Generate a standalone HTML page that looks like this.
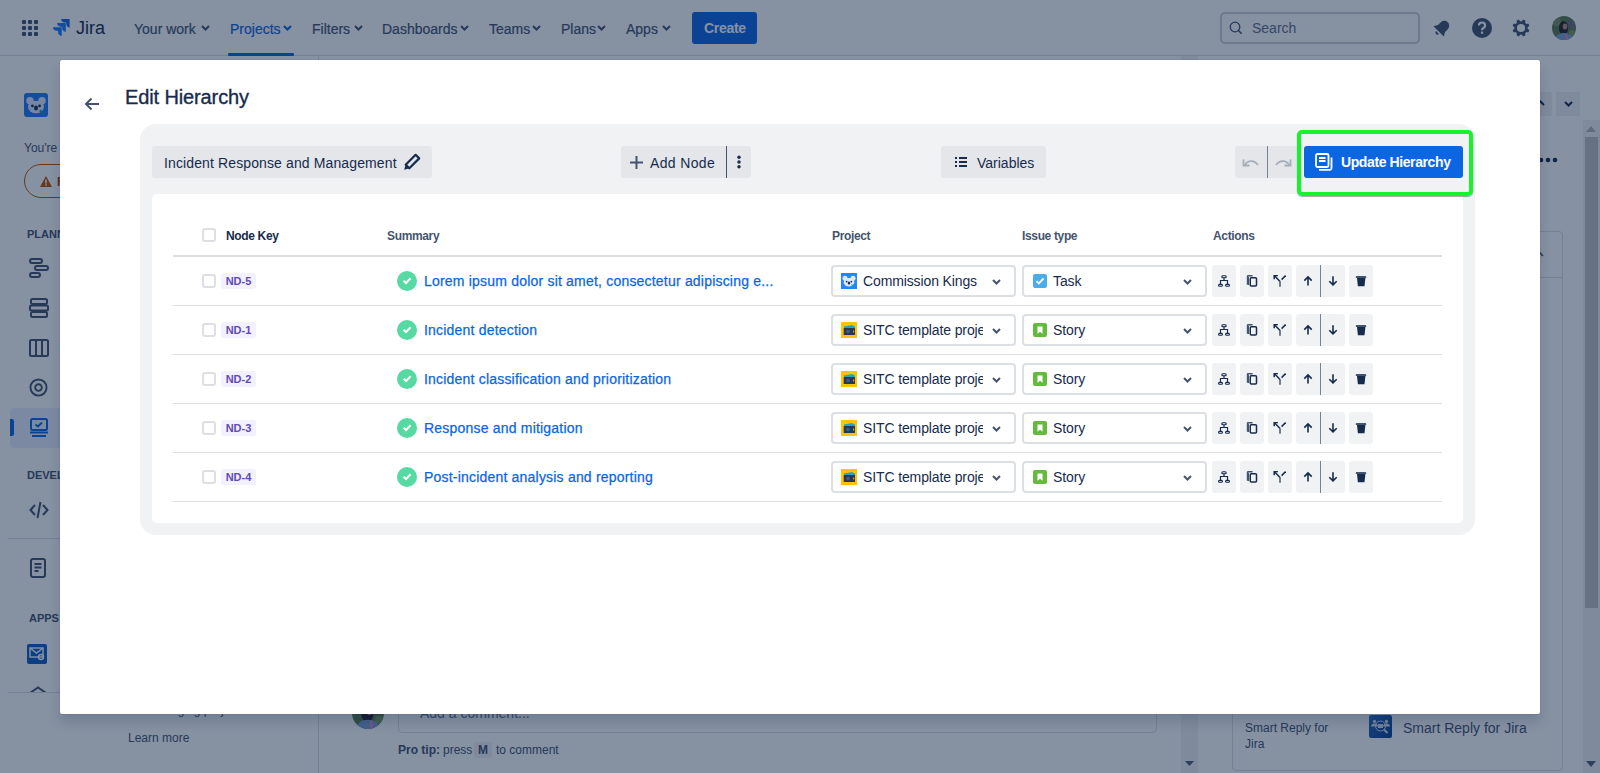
<!DOCTYPE html>
<html><head><meta charset="utf-8">
<style>
*{box-sizing:border-box;margin:0;padding:0}
html,body{width:1600px;height:773px;overflow:hidden;background:#fff;font-family:"Liberation Sans",sans-serif;color:#172b4d}
.a{position:absolute}
svg{display:block}
.nav{left:0;top:0;width:1600px;height:56px;background:#fff;border-bottom:1px solid #dcdfe4}
.ni{top:22px;font-size:14px;color:#44546f;white-space:nowrap;line-height:14px;-webkit-text-stroke:0.2px currentColor}
.side{left:0;top:56px;width:319px;height:717px;background:#fff;border-right:1px solid #dcdfe4}
.lab{font-size:11px;font-weight:bold;color:#44546f;line-height:11px}
.blanket{left:0;top:0;width:1600px;height:773px;background:rgba(9,30,66,0.49)}
.modal{left:60px;top:60px;width:1480px;height:654px;background:#fff;border-radius:2px;box-shadow:0 8px 12px rgba(9,30,66,0.15),0 0 1px rgba(9,30,66,0.31)}
.panel{left:140px;top:124px;width:1335px;height:411px;background:#f1f2f4;border-radius:16px}
.btn{background:#e4e6ea;border-radius:3px;height:32px;top:146px;font-size:14px;color:#172b4d;white-space:nowrap}
.btn .t{position:absolute;top:9px;line-height:14px}
.cont{left:152px;top:194px;width:1311px;height:329px;background:#fff;border-radius:5px}
.th{top:230px;font-size:12px;font-weight:bold;color:#44546f;line-height:12px;white-space:nowrap;letter-spacing:-0.35px}
.hl{left:173px;width:1269px;height:1px;background:#dcdfe4}
.cb{left:202px;width:14px;height:14px;border:2px solid #dcdfe4;border-radius:3px;background:#fff}
.loz{left:221px;width:35px;height:16px;background:#f3f0ff;border-radius:3px;color:#5e4db2;font-size:11px;font-weight:bold;line-height:16px;text-align:center}
.chk{left:397px;width:20px;height:20px;border-radius:50%;background:#57d9a3}
.sum{left:424px;font-size:14px;color:#0c66e4;line-height:14px;white-space:nowrap;letter-spacing:0.2px;-webkit-text-stroke:0.25px #0c66e4}
.sel{height:32px;border:2px solid #dcdfe4;border-radius:4px;background:#fff}
.sel .t{position:absolute;left:30px;top:6px;font-size:14px;line-height:16px;color:#172b4d;white-space:nowrap;letter-spacing:-0.12px}
.ab{width:24px;height:32px;background:#f1f2f4;border-radius:3px}
</style></head><body>

<!-- ============ background page ============ -->
<div class="a nav"></div>
<!-- grid icon -->
<svg class="a" style="left:22px;top:20px" width="16" height="16" viewBox="0 0 16 16" fill="#44546f">
<rect x="0" y="0" width="4" height="4" rx="1"/><rect x="6" y="0" width="4" height="4" rx="1"/><rect x="12" y="0" width="4" height="4" rx="1"/>
<rect x="0" y="6" width="4" height="4" rx="1"/><rect x="6" y="6" width="4" height="4" rx="1"/><rect x="12" y="6" width="4" height="4" rx="1"/>
<rect x="0" y="12" width="4" height="4" rx="1"/><rect x="6" y="12" width="4" height="4" rx="1"/><rect x="12" y="12" width="4" height="4" rx="1"/>
</svg>
<!-- jira logo -->
<svg class="a" style="left:52px;top:19px" width="18" height="18" viewBox="0 0 18 18">
<path d="M17.5 0H9.2c0 2 1.6 3.6 3.6 3.6h1.5v1.5c0 2 1.6 3.6 3.3 3.6V.6c0-.3-.1-.6-.1-.6z" fill="#1868db"/>
<path d="M13.4 4.1H5.1c0 2 1.6 3.6 3.6 3.6h1.5v1.5c0 2 1.6 3.6 3.6 3.6V4.7c0-.3-.2-.6-.4-.6z" fill="#1d7afc"/>
<path d="M9.3 8.2H1c0 2 1.6 3.6 3.6 3.6h1.5v1.5c0 2 1.6 3.6 3.6 3.6V8.8c0-.3-.2-.6-.4-.6z" fill="#1d7afc"/>
</svg>
<div class="a" style="left:76px;top:19px;font-size:18px;line-height:18px;color:#172b4d;letter-spacing:0px">Jira</div>

<div class="a ni" style="left:134px">Your work</div>
<svg class="a" style="left:201px;top:25px" width="9" height="6" viewBox="0 0 9 6"><path d="M1 1l3.5 3.5L8 1" stroke="#44546f" stroke-width="2" fill="none"/></svg>
<div class="a ni" style="left:230px;color:#0c66e4">Projects</div>
<svg class="a" style="left:283px;top:25px" width="9" height="6" viewBox="0 0 9 6"><path d="M1 1l3.5 3.5L8 1" stroke="#0c66e4" stroke-width="2" fill="none"/></svg>
<div class="a" style="left:228px;top:53px;width:66px;height:3px;background:#0c66e4;border-radius:1px"></div>
<div class="a ni" style="left:312px">Filters</div>
<svg class="a" style="left:354px;top:25px" width="9" height="6" viewBox="0 0 9 6"><path d="M1 1l3.5 3.5L8 1" stroke="#44546f" stroke-width="2" fill="none"/></svg>
<div class="a ni" style="left:382px">Dashboards</div>
<svg class="a" style="left:460px;top:25px" width="9" height="6" viewBox="0 0 9 6"><path d="M1 1l3.5 3.5L8 1" stroke="#44546f" stroke-width="2" fill="none"/></svg>
<div class="a ni" style="left:489px">Teams</div>
<svg class="a" style="left:532px;top:25px" width="9" height="6" viewBox="0 0 9 6"><path d="M1 1l3.5 3.5L8 1" stroke="#44546f" stroke-width="2" fill="none"/></svg>
<div class="a ni" style="left:561px">Plans</div>
<svg class="a" style="left:597px;top:25px" width="9" height="6" viewBox="0 0 9 6"><path d="M1 1l3.5 3.5L8 1" stroke="#44546f" stroke-width="2" fill="none"/></svg>
<div class="a ni" style="left:626px">Apps</div>
<svg class="a" style="left:662px;top:25px" width="9" height="6" viewBox="0 0 9 6"><path d="M1 1l3.5 3.5L8 1" stroke="#44546f" stroke-width="2" fill="none"/></svg>
<div class="a" style="left:692px;top:12px;width:65px;height:32px;background:#0c66e4;border-radius:3px"></div>
<div class="a" style="left:704px;top:21px;font-size:14px;line-height:14px;color:#fff;font-weight:bold;letter-spacing:-0.3px">Create</div>

<div class="a" style="left:1220px;top:12px;width:200px;height:32px;border:2px solid #ccd1d9;border-radius:5px;background:#fff"></div>
<svg class="a" style="left:1229px;top:21px" width="14" height="14" viewBox="0 0 14 14"><circle cx="6" cy="6" r="4.8" stroke="#44546f" stroke-width="1.3" fill="none"/><path d="M9.5 9.5l3.2 3.2" stroke="#44546f" stroke-width="1.4"/></svg>
<div class="a" style="left:1252px;top:21px;font-size:14px;line-height:14px;color:#626f86">Search</div>
<!-- bell -->
<svg class="a" style="left:1431px;top:17px" width="22" height="22" viewBox="0 0 24 24"><g transform="rotate(45 12 12)" fill="#44546f"><path d="M12 3.2c-3.4 0-5.4 2.6-5.4 5.6v4L4 17.2h16l-2.6-4.4v-4c0-3-2-5.6-5.4-5.6z"/><path d="M9.8 19a2.2 2.2 0 0 0 4.4 0z"/></g></svg>
<!-- help -->
<svg class="a" style="left:1472px;top:18px" width="20" height="20" viewBox="0 0 20 20"><circle cx="10" cy="10" r="10" fill="#44546f"/><path d="M6.9 7.6c0-1.9 1.4-3.1 3.1-3.1s3.1 1.2 3.1 3.1c0 1.6-1.2 2.2-2 2.6-.6.3-1 .6-1 1.3v.8" stroke="#fff" stroke-width="2.2" fill="none"/><rect x="8.9" y="13.6" width="2.3" height="2.2" fill="#fff"/></svg>
<!-- gear -->
<svg class="a" style="left:1512px;top:19px" width="18" height="18" viewBox="0 0 18 18"><g fill="#44546f"><rect x="7.4" y="0.4" width="3.2" height="3.6" rx="1.1" transform="rotate(22.5 9 9)"/><rect x="7.4" y="0.4" width="3.2" height="3.6" rx="1.1" transform="rotate(67.5 9 9)"/><rect x="7.4" y="0.4" width="3.2" height="3.6" rx="1.1" transform="rotate(112.5 9 9)"/><rect x="7.4" y="0.4" width="3.2" height="3.6" rx="1.1" transform="rotate(157.5 9 9)"/><rect x="7.4" y="0.4" width="3.2" height="3.6" rx="1.1" transform="rotate(202.5 9 9)"/><rect x="7.4" y="0.4" width="3.2" height="3.6" rx="1.1" transform="rotate(247.5 9 9)"/><rect x="7.4" y="0.4" width="3.2" height="3.6" rx="1.1" transform="rotate(292.5 9 9)"/><rect x="7.4" y="0.4" width="3.2" height="3.6" rx="1.1" transform="rotate(337.5 9 9)"/></g><circle cx="9" cy="9" r="5.4" stroke="#44546f" stroke-width="2.6" fill="none"/></svg>
<!-- avatar -->
<svg class="a" style="left:1552px;top:16px" width="24" height="24" viewBox="0 0 24 24"><defs><clipPath id="avc"><circle cx="12" cy="12" r="12"/></clipPath></defs><g clip-path="url(#avc)"><rect width="24" height="24" fill="#5f7d4e"/><circle cx="5" cy="6" r="4" fill="#7a8f63"/><circle cx="19" cy="8" r="4" fill="#6a6f7a"/><circle cx="20" cy="17" r="3" fill="#7d9a5a"/><ellipse cx="11.5" cy="12" rx="4.6" ry="7" fill="#2b2327"/><ellipse cx="13" cy="10.5" rx="2.3" ry="3" fill="#b98f7e"/><path d="M3 24c1-5 4-7 9-7s8 2 9 7z" fill="#7d9fd0"/><rect x="13.5" y="18" width="2.2" height="6" fill="#d98cbf"/></g></svg>
<div class="a side"></div>
<!-- project icon -->
<div class="a" style="left:24px;top:93px;width:24px;height:24px;background:#1d7afc;border-radius:3px"></div>
<svg class="a" style="left:24px;top:93px" width="24" height="24" viewBox="0 0 16 16"><circle cx="4" cy="5.2" r="2.5" fill="#dfeaff"/><circle cx="12" cy="5.2" r="2.5" fill="#dfeaff"/><ellipse cx="8" cy="9.3" rx="5.3" ry="4.2" fill="#dfeaff"/><circle cx="5.6" cy="8.6" r=".9" fill="#172b4d"/><circle cx="10.4" cy="8.6" r=".9" fill="#172b4d"/><ellipse cx="8" cy="10" rx="1.3" ry="1.6" fill="#172b4d"/><path d="M10.5 11.5l2.5 2.5" stroke="#00a3bf" stroke-width="1.3"/></svg>
<div class="a" style="left:24px;top:142px;font-size:12px;line-height:12px;color:#44546f;white-space:nowrap">You're in a team-managed project</div>
<div class="a" style="left:24px;top:164px;width:200px;height:34px;border:1px solid #c25100;border-radius:17px"></div>
<svg class="a" style="left:40px;top:176px" width="12" height="11" viewBox="0 0 12 11"><path d="M6 0l6 11H0z" fill="#c25100"/><rect x="5.2" y="3.5" width="1.6" height="4" fill="#fff"/><rect x="5.2" y="8.3" width="1.6" height="1.4" fill="#fff"/></svg>
<div class="a" style="left:57px;top:176px;font-size:12px;line-height:12px;font-weight:bold;color:#a54800;white-space:nowrap">Free trial</div>
<div class="a lab" style="left:27px;top:229px">PLANNING</div>
<!-- sidebar icons -->
<svg class="a" style="left:29px;top:258px" width="20" height="20" viewBox="0 0 20 20" fill="none" stroke="#44546f" stroke-width="2"><rect x="1" y="1" width="12" height="4" rx="2"/><rect x="6" y="8" width="13" height="4" rx="2"/><rect x="1" y="15" width="10" height="4" rx="2"/></svg>
<svg class="a" style="left:29px;top:298px" width="20" height="20" viewBox="0 0 20 20" fill="none" stroke="#44546f" stroke-width="2"><rect x="2" y="1" width="16" height="5" rx="1.5"/><rect x="1" y="7.5" width="18" height="5" rx="1.5"/><rect x="2" y="14" width="16" height="5" rx="1.5"/></svg>
<svg class="a" style="left:29px;top:339px" width="20" height="18" viewBox="0 0 20 18" fill="none" stroke="#44546f" stroke-width="2"><rect x="1" y="1" width="18" height="16" rx="1.5"/><path d="M7 1v16M13 1v16"/></svg>
<svg class="a" style="left:29px;top:378px" width="19" height="19" viewBox="0 0 20 20" fill="none" stroke="#44546f" stroke-width="2"><circle cx="10" cy="10" r="8.5"/><circle cx="10" cy="10" r="3.5"/></svg>
<div class="a" style="left:10px;top:408px;width:300px;height:40px;background:#e9f2ff;border-radius:4px"></div>
<div class="a" style="left:10px;top:419px;width:4px;height:17px;background:#0c66e4;border-radius:0 2px 2px 0"></div>
<svg class="a" style="left:29px;top:418px" width="20" height="19" viewBox="0 0 20 19" fill="none" stroke="#0c66e4" stroke-width="2"><rect x="2" y="1" width="16" height="11" rx="1.5"/><path d="M6.5 6.5l2.5 2 4-4" /><path d="M1 14.5h18M3 18h14"/></svg>
<div class="a lab" style="left:27px;top:470px">DEVELOPMENT</div>
<svg class="a" style="left:29px;top:501px" width="20" height="18" viewBox="0 0 20 18" fill="none" stroke="#44546f" stroke-width="2"><path d="M6 4L1.5 9 6 14M14 4l4.5 5L14 14M11.5 1L8.5 17"/></svg>
<div class="a" style="left:8px;top:538px;width:303px;height:1px;background:#dcdfe4"></div>
<svg class="a" style="left:30px;top:558px" width="16" height="20" viewBox="0 0 16 20" fill="none" stroke="#44546f" stroke-width="2"><rect x="1" y="1" width="14" height="18" rx="2"/><path d="M4.5 6h7M4.5 9.5h7M4.5 13h4"/></svg>
<div class="a lab" style="left:29px;top:613px">APPS</div>
<div class="a" style="left:27px;top:644px;width:20px;height:20px;background:#0c5fc9;border-radius:2px"></div>
<svg class="a" style="left:29px;top:647px" width="16" height="14" viewBox="0 0 16 14" fill="none" stroke="#fff" stroke-width="1.4"><rect x="1" y="1" width="13" height="9"/><path d="M1 1l6.5 5L14 1"/><circle cx="12" cy="10" r="2.5"/></svg>
<svg class="a" style="left:28px;top:686px" width="20" height="7" viewBox="0 0 20 7"><path d="M2 7L10 1.5 18 7" stroke="#44546f" stroke-width="2" fill="none"/></svg>
<div class="a" style="left:8px;top:692px;width:303px;height:1px;background:#dcdfe4"></div>
<div class="a" style="left:128px;top:732px;font-size:12px;line-height:12px;color:#44546f">Learn more</div>
<div class="a" style="left:60px;top:704px;width:200px;text-align:center;font-size:12px;line-height:12px;color:#44546f">Learn about managing project</div>

<!-- content area bits -->
<svg class="a" style="left:352px;top:697px" width="32" height="32" viewBox="0 0 24 24"><defs><clipPath id="avc2"><circle cx="12" cy="12" r="12"/></clipPath></defs><g clip-path="url(#avc2)"><rect width="24" height="24" fill="#5f7d4e"/><circle cx="5" cy="6" r="4" fill="#7a8f63"/><circle cx="19" cy="8" r="4" fill="#6a6f7a"/><circle cx="20" cy="17" r="3" fill="#7d9a5a"/><ellipse cx="11.5" cy="12" rx="4.6" ry="7" fill="#2b2327"/><ellipse cx="13" cy="10.5" rx="2.3" ry="3" fill="#b98f7e"/><path d="M3 24c1-5 4-7 9-7s8 2 9 7z" fill="#7d9fd0"/><rect x="13.5" y="18" width="2.2" height="6" fill="#d98cbf"/></g></svg>
<div class="a" style="left:398px;top:690px;width:759px;height:43px;border:1px solid #dcdfe4;border-radius:4px;background:#fff"></div>
<div class="a" style="left:420px;top:706px;font-size:14px;line-height:14px;color:#626f86">Add a comment...</div>
<div class="a" style="left:398px;top:744px;font-size:12px;line-height:12px;color:#44546f;white-space:nowrap;font-weight:bold">Pro tip:</div>
<div class="a" style="left:443px;top:744px;font-size:12px;line-height:12px;color:#44546f;white-space:nowrap">press</div>
<div class="a" style="left:474px;top:742px;width:18px;height:16px;background:#f1f2f4;border-radius:3px;font-size:12px;line-height:16px;text-align:center;font-weight:bold;color:#44546f">M</div>
<div class="a" style="left:496px;top:744px;font-size:12px;line-height:12px;color:#44546f;white-space:nowrap">to comment</div>
<!-- middle scrollbar -->
<div class="a" style="left:1181px;top:56px;width:17px;height:717px;background:#f1f2f4"></div>
<svg class="a" style="left:1185px;top:761px" width="9" height="6" viewBox="0 0 9 6"><path d="M0 0h9L4.5 5z" fill="#505f79"/></svg>
<!-- right panel -->
<div class="a" style="left:1528px;top:92px;width:24px;height:24px;background:#f1f2f4;border-radius:3px"></div>
<svg class="a" style="left:1536px;top:100px" width="9" height="6" viewBox="0 0 9 6"><path d="M1 5l3.5-3.5L8 5" stroke="#172b4d" stroke-width="2" fill="none"/></svg>
<div class="a" style="left:1556px;top:92px;width:24px;height:24px;background:#f1f2f4;border-radius:3px"></div>
<svg class="a" style="left:1564px;top:101px" width="9" height="6" viewBox="0 0 9 6"><path d="M1 1l3.5 3.5L8 1" stroke="#172b4d" stroke-width="2" fill="none"/></svg>
<svg class="a" style="left:1538px;top:156px" width="20" height="8" viewBox="0 0 20 8" fill="#172b4d"><circle cx="3" cy="4" r="2.3"/><circle cx="10" cy="4" r="2.3"/><circle cx="17" cy="4" r="2.3"/></svg>
<div class="a" style="left:1232px;top:231px;width:331px;height:540px;border:1px solid #dcdfe4;border-radius:4px"></div>
<div class="a" style="left:1232px;top:277px;width:331px;height:1px;background:#dcdfe4"></div>
<svg class="a" style="left:1535px;top:251px" width="9" height="6" viewBox="0 0 9 6"><path d="M1 5l3.5-3.5L8 5" stroke="#44546f" stroke-width="1.6" fill="none"/></svg>
<div class="a" style="left:1245px;top:720px;font-size:12px;line-height:16px;color:#44546f;width:100px">Smart Reply for Jira</div>
<svg class="a" style="left:1369px;top:715px" width="23" height="23" viewBox="0 0 23 23"><defs><linearGradient id="srg" x1="0" y1="0" x2="1" y2="1"><stop offset="0" stop-color="#2a6fc9"/><stop offset="1" stop-color="#0a3f8a"/></linearGradient></defs><rect width="23" height="23" rx="2" fill="url(#srg)"/><g fill="#d9e2f0"><circle cx="5.5" cy="6.5" r="1.7"/><circle cx="17.5" cy="6.5" r="1.7"/><path d="M2 11.5c0-2 1.5-3 3.5-3s3.5 1 3.5 3z"/><path d="M14 11.5c0-2 1.5-3 3.5-3s3.5 1 3.5 3z"/><rect x="9" y="9" width="5" height="4" rx=".6"/></g><circle cx="11.5" cy="11" r="5" stroke="#d9e2f0" stroke-width="1" fill="none"/><path d="M15 14.5l3.5 3.5" stroke="#d9e2f0" stroke-width="1.8"/></svg>
<div class="a" style="left:1403px;top:721px;font-size:14px;line-height:14px;color:#44546f">Smart Reply for Jira</div>
<!-- right scrollbar -->
<div class="a" style="left:1583px;top:120px;width:17px;height:653px;background:#f1f2f4"></div>
<div class="a" style="left:1585px;top:137px;width:13px;height:471px;background:#c1c1c1"></div>
<svg class="a" style="left:1586px;top:126px" width="10" height="6" viewBox="0 0 10 6"><path d="M0 6h10L5 0z" fill="#b4b4b4"/></svg>
<svg class="a" style="left:1586px;top:761px" width="10" height="6" viewBox="0 0 10 6"><path d="M0 0h10L5 6z" fill="#505f79"/></svg>

<div class="a blanket"></div>

<!-- ============ modal ============ -->
<div class="a modal"></div>
<svg class="a" style="left:84px;top:97px" width="16" height="14" viewBox="0 0 16 14" fill="none" stroke="#44546f" stroke-width="2"><path d="M15 7H2M7.5 1.5L2 7l5.5 5.5"/></svg>
<div class="a" style="left:125px;top:87px;font-size:20px;line-height:20px;color:#172b4d;letter-spacing:-0.12px;-webkit-text-stroke:0.35px #172b4d">Edit Hierarchy</div>

<div class="a panel"></div>
<div class="a cont"></div>

<!-- toolbar -->
<div class="a btn" style="left:152px;width:280px"><span class="t" style="left:12px;top:10px;letter-spacing:0.12px">Incident Response and Management</span></div>
<svg class="a" style="left:403px;top:153px" width="18" height="18" viewBox="0 0 18 18"><path d="M12.6 1.8l3.6 3.6L6.3 15.3 2.7 11.7z" fill="none" stroke="#172b4d" stroke-width="2.2" stroke-linejoin="round"/><path d="M1.2 16.8l1.2-4.6 3.4 3.4z" fill="#172b4d"/></svg>

<div class="a btn" style="left:621px;width:130px"><span class="t" style="left:29px;top:10px;letter-spacing:0.35px">Add Node</span></div>
<div class="a" style="left:726px;top:146px;width:1px;height:32px;background:#44546f"></div>
<svg class="a" style="left:630px;top:156px" width="13" height="13" viewBox="0 0 13 13"><path d="M6.5 0v13M0 6.5h13" stroke="#44546f" stroke-width="2"/></svg>
<svg class="a" style="left:736px;top:155px" width="6" height="14" viewBox="0 0 6 14" fill="#172b4d"><circle cx="3" cy="2.2" r="1.7"/><circle cx="3" cy="7" r="1.7"/><circle cx="3" cy="11.8" r="1.7"/></svg>

<div class="a btn" style="left:941px;width:105px"><span class="t" style="left:36px;top:10px">Variables</span></div>
<svg class="a" style="left:955px;top:157px" width="12" height="10" viewBox="0 0 12 10" fill="#172b4d"><rect x="0" y="0" width="2" height="2"/><rect x="4" y="0" width="8" height="2"/><rect x="0" y="4" width="2" height="2"/><rect x="4" y="4" width="8" height="2"/><rect x="0" y="8" width="2" height="2"/><rect x="4" y="8" width="8" height="2"/></svg>

<div class="a btn" style="left:1235px;width:64px"></div>
<div class="a" style="left:1267px;top:146px;width:1px;height:32px;background:#758195"></div>
<svg class="a" style="left:1242px;top:157px" width="18" height="10" viewBox="0 0 18 10" fill="none" stroke="#a5adba" stroke-width="1.8"><path d="M2.5 8.5C5 3.5 11.5 2 16 8"/><path d="M1.5 2.5v6h6" /></svg>
<svg class="a" style="left:1274px;top:157px" width="18" height="10" viewBox="0 0 18 10" fill="none" stroke="#a5adba" stroke-width="1.8"><path d="M15.5 8.5C13 3.5 6.5 2 2 8"/><path d="M16.5 2.5v6h-6" /></svg>

<div class="a" style="left:1297px;top:130px;width:176px;height:66px;border:4px solid #16f22c;border-radius:5px;box-shadow:0 1px 1px rgba(0,0,0,0.35)"></div>
<div class="a" style="left:1304px;top:146px;width:159px;height:32px;background:#0c66e4;border-radius:3px"></div>
<svg class="a" style="left:1315px;top:153px" width="18" height="18" viewBox="0 0 18 18" fill="none" stroke="#fff" stroke-width="1.8"><rect x="1" y="1" width="12.5" height="13" rx="1.5"/><path d="M4 5h6.5M4 8h6.5"/><path d="M16.5 4.5v10.5a1.8 1.8 0 0 1-1.8 1.8H4"/></svg>
<div class="a" style="left:1341px;top:155px;font-size:14px;line-height:14px;color:#fff;font-weight:bold;letter-spacing:-0.4px;white-space:nowrap">Update Hierarchy</div>

<!-- table header -->
<div class="a cb" style="top:228px"></div>
<div class="a th" style="left:226px;color:#172b4d">Node Key</div>
<div class="a th" style="left:387px">Summary</div>
<div class="a th" style="left:832px">Project</div>
<div class="a th" style="left:1022px">Issue type</div>
<div class="a th" style="left:1213px">Actions</div>
<div class="a hl" style="top:255px;height:2px"></div>

<!-- row ND-5 -->
<div class="a cb" style="top:274px"></div>
<div class="a loz" style="top:273px">ND-5</div>
<div class="a chk" style="top:271px"></div>
<svg class="a" style="left:401px;top:275px" width="12" height="12" viewBox="0 0 12 12"><path d="M2.6 5.7l2.4 2.3 4.6-4.8" stroke="#fff" stroke-width="2" fill="none"/></svg>
<div class="a sum" style="top:274px">Lorem ipsum dolor sit amet, consectetur adipiscing e...</div>
<div class="a sel" style="left:831px;top:265px;width:185px"><span class="t" style="width:130px;overflow:hidden">Commission Kings</span></div>
<svg class="a" style="left:841px;top:273px" width="16" height="16" viewBox="0 0 16 16"><rect width="16" height="16" fill="#2684ff"/><circle cx="4" cy="5.2" r="2.5" fill="#dfeaff"/><circle cx="12" cy="5.2" r="2.5" fill="#dfeaff"/><ellipse cx="8" cy="9.3" rx="5.3" ry="4.2" fill="#dfeaff"/><circle cx="5.6" cy="8.6" r=".9" fill="#172b4d"/><circle cx="10.4" cy="8.6" r=".9" fill="#172b4d"/><ellipse cx="8" cy="10" rx="1.3" ry="1.6" fill="#172b4d"/><path d="M10.5 11.5l2.5 2.5" stroke="#00a3bf" stroke-width="1.3"/></svg>
<svg class="a" style="left:992px;top:279px" width="9" height="6" viewBox="0 0 9 6"><path d="M1 1l3.5 3.5L8 1" stroke="#44546f" stroke-width="2" fill="none"/></svg>
<div class="a sel" style="left:1022px;top:265px;width:185px"><span class="t" style="left:29px">Task</span></div>
<div class="a" style="left:1033px;top:274px;width:14px;height:14px;background:#4bade8;border-radius:2px"></div>
<svg class="a" style="left:1033px;top:274px" width="14" height="14" viewBox="0 0 14 14"><path d="M3.5 7.2l2.3 2.3 4.7-5" stroke="#fff" stroke-width="1.9" fill="none"/></svg>
<svg class="a" style="left:1183px;top:279px" width="9" height="6" viewBox="0 0 9 6"><path d="M1 1l3.5 3.5L8 1" stroke="#44546f" stroke-width="2" fill="none"/></svg>
<div class="a ab" style="left:1212px;top:265px"></div><div class="a ab" style="left:1240px;top:265px"></div><div class="a ab" style="left:1268px;top:265px"></div><div class="a ab" style="left:1296px;top:265px;width:49px"></div><div class="a" style="left:1320px;top:265px;width:1px;height:32px;background:#758195"></div><div class="a ab" style="left:1349px;top:265px"></div>
<svg class="a" style="left:1218px;top:275px" width="12" height="12" viewBox="0 0 12 12" fill="none" stroke="#172b4d" stroke-width="1.3"><rect x="3.8" y="0.8" width="4.4" height="1.9" rx=".95" stroke-width="1.1"/><rect x="0.55" y="9.35" width="3.9" height="1.9" rx=".95" stroke-width="1.1"/><rect x="7.55" y="9.35" width="3.9" height="1.9" rx=".95" stroke-width="1.1"/><path d="M6 2.7v2.8M2.5 8.9V5.5h7v3.4" stroke-width="1.2"/></svg>
<svg class="a" style="left:1246px;top:275px" width="12" height="12" viewBox="0 0 12 12" fill="none"><path d="M1.6 9.8V1.4a.7.7 0 0 1 .7-.7H6.6" stroke="#44546f" stroke-width="1.6"/><path d="M2.4 2v8" stroke="#44546f" stroke-width="1.2"/><rect x="4.25" y="2.75" width="6.25" height="8.25" rx="1" stroke="#172b4d" stroke-width="1.5"/></svg>
<svg class="a" style="left:1273px;top:275px" width="13" height="12" viewBox="0 0 13 12" fill="none" stroke-width="1.5"><path d="M1.5 0.8L7 6.5" stroke="#172b4d"/><path d="M7 6.2V11.8" stroke="#44546f"/><path d="M1.2 4.3V0.6h3.7" stroke="#172b4d"/><path d="M8.6 4.6L12.6 0.6" stroke="#172b4d"/></svg>
<svg class="a" style="left:1302px;top:275px" width="12" height="12" viewBox="0 0 12 12" fill="none" stroke="#172b4d" stroke-width="1.6"><path d="M6 10.6V2M2.3 5.6L6 1.9l3.7 3.7"/></svg>
<svg class="a" style="left:1327px;top:275px" width="12" height="12" viewBox="0 0 12 12" fill="none" stroke="#172b4d" stroke-width="1.6"><path d="M6 1.2V9.8M2.3 6.2L6 9.9l3.7-3.7"/></svg>
<svg class="a" style="left:1355px;top:275px" width="12" height="12" viewBox="0 0 12 12"><path d="M0.8 1.8a.9.9 0 0 1 .9-.9h8.6a.9.9 0 0 1 .9.9V3H0.8z" fill="#44546f"/><path d="M2 3h8.4l-.9 8.2H2.9z" fill="#172b4d"/></svg>
<div class="a hl" style="top:305px"></div>

<!-- row ND-1 -->
<div class="a cb" style="top:323px"></div>
<div class="a loz" style="top:322px">ND-1</div>
<div class="a chk" style="top:320px"></div>
<svg class="a" style="left:401px;top:324px" width="12" height="12" viewBox="0 0 12 12"><path d="M2.6 5.7l2.4 2.3 4.6-4.8" stroke="#fff" stroke-width="2" fill="none"/></svg>
<div class="a sum" style="top:323px">Incident detection</div>
<div class="a sel" style="left:831px;top:314px;width:185px"><span class="t" style="width:120px;overflow:hidden">SITC template project</span></div>
<svg class="a" style="left:841px;top:322px" width="16" height="16" viewBox="0 0 16 16"><rect width="16" height="16" fill="#ffc400"/><path d="M3 4.5l8-1.5 3 1.5v2H3z" fill="#20a5c9"/><rect x="2.7" y="6" width="11.3" height="7" rx=".6" fill="#253858"/><circle cx="7" cy="9.5" r="1.8" fill="#3a5f99"/><rect x="12" y="8.5" width="1.2" height="2" fill="#d49a2a"/></svg>
<svg class="a" style="left:992px;top:328px" width="9" height="6" viewBox="0 0 9 6"><path d="M1 1l3.5 3.5L8 1" stroke="#44546f" stroke-width="2" fill="none"/></svg>
<div class="a sel" style="left:1022px;top:314px;width:185px"><span class="t" style="left:29px">Story</span></div>
<div class="a" style="left:1033px;top:323px;width:14px;height:14px;background:#63ba3c;border-radius:2px"></div>
<svg class="a" style="left:1033px;top:323px" width="14" height="14" viewBox="0 0 14 14"><path d="M4.5 3.5h5v7.3L7 8.8l-2.5 2z" fill="#fff"/></svg>
<svg class="a" style="left:1183px;top:328px" width="9" height="6" viewBox="0 0 9 6"><path d="M1 1l3.5 3.5L8 1" stroke="#44546f" stroke-width="2" fill="none"/></svg>
<div class="a ab" style="left:1212px;top:314px"></div><div class="a ab" style="left:1240px;top:314px"></div><div class="a ab" style="left:1268px;top:314px"></div><div class="a ab" style="left:1296px;top:314px;width:49px"></div><div class="a" style="left:1320px;top:314px;width:1px;height:32px;background:#758195"></div><div class="a ab" style="left:1349px;top:314px"></div>
<svg class="a" style="left:1218px;top:324px" width="12" height="12" viewBox="0 0 12 12" fill="none" stroke="#172b4d" stroke-width="1.3"><rect x="3.8" y="0.8" width="4.4" height="1.9" rx=".95" stroke-width="1.1"/><rect x="0.55" y="9.35" width="3.9" height="1.9" rx=".95" stroke-width="1.1"/><rect x="7.55" y="9.35" width="3.9" height="1.9" rx=".95" stroke-width="1.1"/><path d="M6 2.7v2.8M2.5 8.9V5.5h7v3.4" stroke-width="1.2"/></svg>
<svg class="a" style="left:1246px;top:324px" width="12" height="12" viewBox="0 0 12 12" fill="none"><path d="M1.6 9.8V1.4a.7.7 0 0 1 .7-.7H6.6" stroke="#44546f" stroke-width="1.6"/><path d="M2.4 2v8" stroke="#44546f" stroke-width="1.2"/><rect x="4.25" y="2.75" width="6.25" height="8.25" rx="1" stroke="#172b4d" stroke-width="1.5"/></svg>
<svg class="a" style="left:1273px;top:324px" width="13" height="12" viewBox="0 0 13 12" fill="none" stroke-width="1.5"><path d="M1.5 0.8L7 6.5" stroke="#172b4d"/><path d="M7 6.2V11.8" stroke="#44546f"/><path d="M1.2 4.3V0.6h3.7" stroke="#172b4d"/><path d="M8.6 4.6L12.6 0.6" stroke="#172b4d"/></svg>
<svg class="a" style="left:1302px;top:324px" width="12" height="12" viewBox="0 0 12 12" fill="none" stroke="#172b4d" stroke-width="1.6"><path d="M6 10.6V2M2.3 5.6L6 1.9l3.7 3.7"/></svg>
<svg class="a" style="left:1327px;top:324px" width="12" height="12" viewBox="0 0 12 12" fill="none" stroke="#172b4d" stroke-width="1.6"><path d="M6 1.2V9.8M2.3 6.2L6 9.9l3.7-3.7"/></svg>
<svg class="a" style="left:1355px;top:324px" width="12" height="12" viewBox="0 0 12 12"><path d="M0.8 1.8a.9.9 0 0 1 .9-.9h8.6a.9.9 0 0 1 .9.9V3H0.8z" fill="#44546f"/><path d="M2 3h8.4l-.9 8.2H2.9z" fill="#172b4d"/></svg>
<div class="a hl" style="top:354px"></div>

<!-- row ND-2 -->
<div class="a cb" style="top:372px"></div>
<div class="a loz" style="top:371px">ND-2</div>
<div class="a chk" style="top:369px"></div>
<svg class="a" style="left:401px;top:373px" width="12" height="12" viewBox="0 0 12 12"><path d="M2.6 5.7l2.4 2.3 4.6-4.8" stroke="#fff" stroke-width="2" fill="none"/></svg>
<div class="a sum" style="top:372px">Incident classification and prioritization</div>
<div class="a sel" style="left:831px;top:363px;width:185px"><span class="t" style="width:120px;overflow:hidden">SITC template project</span></div>
<svg class="a" style="left:841px;top:371px" width="16" height="16" viewBox="0 0 16 16"><rect width="16" height="16" fill="#ffc400"/><path d="M3 4.5l8-1.5 3 1.5v2H3z" fill="#20a5c9"/><rect x="2.7" y="6" width="11.3" height="7" rx=".6" fill="#253858"/><circle cx="7" cy="9.5" r="1.8" fill="#3a5f99"/><rect x="12" y="8.5" width="1.2" height="2" fill="#d49a2a"/></svg>
<svg class="a" style="left:992px;top:377px" width="9" height="6" viewBox="0 0 9 6"><path d="M1 1l3.5 3.5L8 1" stroke="#44546f" stroke-width="2" fill="none"/></svg>
<div class="a sel" style="left:1022px;top:363px;width:185px"><span class="t" style="left:29px">Story</span></div>
<div class="a" style="left:1033px;top:372px;width:14px;height:14px;background:#63ba3c;border-radius:2px"></div>
<svg class="a" style="left:1033px;top:372px" width="14" height="14" viewBox="0 0 14 14"><path d="M4.5 3.5h5v7.3L7 8.8l-2.5 2z" fill="#fff"/></svg>
<svg class="a" style="left:1183px;top:377px" width="9" height="6" viewBox="0 0 9 6"><path d="M1 1l3.5 3.5L8 1" stroke="#44546f" stroke-width="2" fill="none"/></svg>
<div class="a ab" style="left:1212px;top:363px"></div><div class="a ab" style="left:1240px;top:363px"></div><div class="a ab" style="left:1268px;top:363px"></div><div class="a ab" style="left:1296px;top:363px;width:49px"></div><div class="a" style="left:1320px;top:363px;width:1px;height:32px;background:#758195"></div><div class="a ab" style="left:1349px;top:363px"></div>
<svg class="a" style="left:1218px;top:373px" width="12" height="12" viewBox="0 0 12 12" fill="none" stroke="#172b4d" stroke-width="1.3"><rect x="3.8" y="0.8" width="4.4" height="1.9" rx=".95" stroke-width="1.1"/><rect x="0.55" y="9.35" width="3.9" height="1.9" rx=".95" stroke-width="1.1"/><rect x="7.55" y="9.35" width="3.9" height="1.9" rx=".95" stroke-width="1.1"/><path d="M6 2.7v2.8M2.5 8.9V5.5h7v3.4" stroke-width="1.2"/></svg>
<svg class="a" style="left:1246px;top:373px" width="12" height="12" viewBox="0 0 12 12" fill="none"><path d="M1.6 9.8V1.4a.7.7 0 0 1 .7-.7H6.6" stroke="#44546f" stroke-width="1.6"/><path d="M2.4 2v8" stroke="#44546f" stroke-width="1.2"/><rect x="4.25" y="2.75" width="6.25" height="8.25" rx="1" stroke="#172b4d" stroke-width="1.5"/></svg>
<svg class="a" style="left:1273px;top:373px" width="13" height="12" viewBox="0 0 13 12" fill="none" stroke-width="1.5"><path d="M1.5 0.8L7 6.5" stroke="#172b4d"/><path d="M7 6.2V11.8" stroke="#44546f"/><path d="M1.2 4.3V0.6h3.7" stroke="#172b4d"/><path d="M8.6 4.6L12.6 0.6" stroke="#172b4d"/></svg>
<svg class="a" style="left:1302px;top:373px" width="12" height="12" viewBox="0 0 12 12" fill="none" stroke="#172b4d" stroke-width="1.6"><path d="M6 10.6V2M2.3 5.6L6 1.9l3.7 3.7"/></svg>
<svg class="a" style="left:1327px;top:373px" width="12" height="12" viewBox="0 0 12 12" fill="none" stroke="#172b4d" stroke-width="1.6"><path d="M6 1.2V9.8M2.3 6.2L6 9.9l3.7-3.7"/></svg>
<svg class="a" style="left:1355px;top:373px" width="12" height="12" viewBox="0 0 12 12"><path d="M0.8 1.8a.9.9 0 0 1 .9-.9h8.6a.9.9 0 0 1 .9.9V3H0.8z" fill="#44546f"/><path d="M2 3h8.4l-.9 8.2H2.9z" fill="#172b4d"/></svg>
<div class="a hl" style="top:403px"></div>

<!-- row ND-3 -->
<div class="a cb" style="top:421px"></div>
<div class="a loz" style="top:420px">ND-3</div>
<div class="a chk" style="top:418px"></div>
<svg class="a" style="left:401px;top:422px" width="12" height="12" viewBox="0 0 12 12"><path d="M2.6 5.7l2.4 2.3 4.6-4.8" stroke="#fff" stroke-width="2" fill="none"/></svg>
<div class="a sum" style="top:421px">Response and mitigation</div>
<div class="a sel" style="left:831px;top:412px;width:185px"><span class="t" style="width:120px;overflow:hidden">SITC template project</span></div>
<svg class="a" style="left:841px;top:420px" width="16" height="16" viewBox="0 0 16 16"><rect width="16" height="16" fill="#ffc400"/><path d="M3 4.5l8-1.5 3 1.5v2H3z" fill="#20a5c9"/><rect x="2.7" y="6" width="11.3" height="7" rx=".6" fill="#253858"/><circle cx="7" cy="9.5" r="1.8" fill="#3a5f99"/><rect x="12" y="8.5" width="1.2" height="2" fill="#d49a2a"/></svg>
<svg class="a" style="left:992px;top:426px" width="9" height="6" viewBox="0 0 9 6"><path d="M1 1l3.5 3.5L8 1" stroke="#44546f" stroke-width="2" fill="none"/></svg>
<div class="a sel" style="left:1022px;top:412px;width:185px"><span class="t" style="left:29px">Story</span></div>
<div class="a" style="left:1033px;top:421px;width:14px;height:14px;background:#63ba3c;border-radius:2px"></div>
<svg class="a" style="left:1033px;top:421px" width="14" height="14" viewBox="0 0 14 14"><path d="M4.5 3.5h5v7.3L7 8.8l-2.5 2z" fill="#fff"/></svg>
<svg class="a" style="left:1183px;top:426px" width="9" height="6" viewBox="0 0 9 6"><path d="M1 1l3.5 3.5L8 1" stroke="#44546f" stroke-width="2" fill="none"/></svg>
<div class="a ab" style="left:1212px;top:412px"></div><div class="a ab" style="left:1240px;top:412px"></div><div class="a ab" style="left:1268px;top:412px"></div><div class="a ab" style="left:1296px;top:412px;width:49px"></div><div class="a" style="left:1320px;top:412px;width:1px;height:32px;background:#758195"></div><div class="a ab" style="left:1349px;top:412px"></div>
<svg class="a" style="left:1218px;top:422px" width="12" height="12" viewBox="0 0 12 12" fill="none" stroke="#172b4d" stroke-width="1.3"><rect x="3.8" y="0.8" width="4.4" height="1.9" rx=".95" stroke-width="1.1"/><rect x="0.55" y="9.35" width="3.9" height="1.9" rx=".95" stroke-width="1.1"/><rect x="7.55" y="9.35" width="3.9" height="1.9" rx=".95" stroke-width="1.1"/><path d="M6 2.7v2.8M2.5 8.9V5.5h7v3.4" stroke-width="1.2"/></svg>
<svg class="a" style="left:1246px;top:422px" width="12" height="12" viewBox="0 0 12 12" fill="none"><path d="M1.6 9.8V1.4a.7.7 0 0 1 .7-.7H6.6" stroke="#44546f" stroke-width="1.6"/><path d="M2.4 2v8" stroke="#44546f" stroke-width="1.2"/><rect x="4.25" y="2.75" width="6.25" height="8.25" rx="1" stroke="#172b4d" stroke-width="1.5"/></svg>
<svg class="a" style="left:1273px;top:422px" width="13" height="12" viewBox="0 0 13 12" fill="none" stroke-width="1.5"><path d="M1.5 0.8L7 6.5" stroke="#172b4d"/><path d="M7 6.2V11.8" stroke="#44546f"/><path d="M1.2 4.3V0.6h3.7" stroke="#172b4d"/><path d="M8.6 4.6L12.6 0.6" stroke="#172b4d"/></svg>
<svg class="a" style="left:1302px;top:422px" width="12" height="12" viewBox="0 0 12 12" fill="none" stroke="#172b4d" stroke-width="1.6"><path d="M6 10.6V2M2.3 5.6L6 1.9l3.7 3.7"/></svg>
<svg class="a" style="left:1327px;top:422px" width="12" height="12" viewBox="0 0 12 12" fill="none" stroke="#172b4d" stroke-width="1.6"><path d="M6 1.2V9.8M2.3 6.2L6 9.9l3.7-3.7"/></svg>
<svg class="a" style="left:1355px;top:422px" width="12" height="12" viewBox="0 0 12 12"><path d="M0.8 1.8a.9.9 0 0 1 .9-.9h8.6a.9.9 0 0 1 .9.9V3H0.8z" fill="#44546f"/><path d="M2 3h8.4l-.9 8.2H2.9z" fill="#172b4d"/></svg>
<div class="a hl" style="top:452px"></div>

<!-- row ND-4 -->
<div class="a cb" style="top:470px"></div>
<div class="a loz" style="top:469px">ND-4</div>
<div class="a chk" style="top:467px"></div>
<svg class="a" style="left:401px;top:471px" width="12" height="12" viewBox="0 0 12 12"><path d="M2.6 5.7l2.4 2.3 4.6-4.8" stroke="#fff" stroke-width="2" fill="none"/></svg>
<div class="a sum" style="top:470px">Post-incident analysis and reporting</div>
<div class="a sel" style="left:831px;top:461px;width:185px"><span class="t" style="width:120px;overflow:hidden">SITC template project</span></div>
<svg class="a" style="left:841px;top:469px" width="16" height="16" viewBox="0 0 16 16"><rect width="16" height="16" fill="#ffc400"/><path d="M3 4.5l8-1.5 3 1.5v2H3z" fill="#20a5c9"/><rect x="2.7" y="6" width="11.3" height="7" rx=".6" fill="#253858"/><circle cx="7" cy="9.5" r="1.8" fill="#3a5f99"/><rect x="12" y="8.5" width="1.2" height="2" fill="#d49a2a"/></svg>
<svg class="a" style="left:992px;top:475px" width="9" height="6" viewBox="0 0 9 6"><path d="M1 1l3.5 3.5L8 1" stroke="#44546f" stroke-width="2" fill="none"/></svg>
<div class="a sel" style="left:1022px;top:461px;width:185px"><span class="t" style="left:29px">Story</span></div>
<div class="a" style="left:1033px;top:470px;width:14px;height:14px;background:#63ba3c;border-radius:2px"></div>
<svg class="a" style="left:1033px;top:470px" width="14" height="14" viewBox="0 0 14 14"><path d="M4.5 3.5h5v7.3L7 8.8l-2.5 2z" fill="#fff"/></svg>
<svg class="a" style="left:1183px;top:475px" width="9" height="6" viewBox="0 0 9 6"><path d="M1 1l3.5 3.5L8 1" stroke="#44546f" stroke-width="2" fill="none"/></svg>
<div class="a ab" style="left:1212px;top:461px"></div><div class="a ab" style="left:1240px;top:461px"></div><div class="a ab" style="left:1268px;top:461px"></div><div class="a ab" style="left:1296px;top:461px;width:49px"></div><div class="a" style="left:1320px;top:461px;width:1px;height:32px;background:#758195"></div><div class="a ab" style="left:1349px;top:461px"></div>
<svg class="a" style="left:1218px;top:471px" width="12" height="12" viewBox="0 0 12 12" fill="none" stroke="#172b4d" stroke-width="1.3"><rect x="3.8" y="0.8" width="4.4" height="1.9" rx=".95" stroke-width="1.1"/><rect x="0.55" y="9.35" width="3.9" height="1.9" rx=".95" stroke-width="1.1"/><rect x="7.55" y="9.35" width="3.9" height="1.9" rx=".95" stroke-width="1.1"/><path d="M6 2.7v2.8M2.5 8.9V5.5h7v3.4" stroke-width="1.2"/></svg>
<svg class="a" style="left:1246px;top:471px" width="12" height="12" viewBox="0 0 12 12" fill="none"><path d="M1.6 9.8V1.4a.7.7 0 0 1 .7-.7H6.6" stroke="#44546f" stroke-width="1.6"/><path d="M2.4 2v8" stroke="#44546f" stroke-width="1.2"/><rect x="4.25" y="2.75" width="6.25" height="8.25" rx="1" stroke="#172b4d" stroke-width="1.5"/></svg>
<svg class="a" style="left:1273px;top:471px" width="13" height="12" viewBox="0 0 13 12" fill="none" stroke-width="1.5"><path d="M1.5 0.8L7 6.5" stroke="#172b4d"/><path d="M7 6.2V11.8" stroke="#44546f"/><path d="M1.2 4.3V0.6h3.7" stroke="#172b4d"/><path d="M8.6 4.6L12.6 0.6" stroke="#172b4d"/></svg>
<svg class="a" style="left:1302px;top:471px" width="12" height="12" viewBox="0 0 12 12" fill="none" stroke="#172b4d" stroke-width="1.6"><path d="M6 10.6V2M2.3 5.6L6 1.9l3.7 3.7"/></svg>
<svg class="a" style="left:1327px;top:471px" width="12" height="12" viewBox="0 0 12 12" fill="none" stroke="#172b4d" stroke-width="1.6"><path d="M6 1.2V9.8M2.3 6.2L6 9.9l3.7-3.7"/></svg>
<svg class="a" style="left:1355px;top:471px" width="12" height="12" viewBox="0 0 12 12"><path d="M0.8 1.8a.9.9 0 0 1 .9-.9h8.6a.9.9 0 0 1 .9.9V3H0.8z" fill="#44546f"/><path d="M2 3h8.4l-.9 8.2H2.9z" fill="#172b4d"/></svg>
<div class="a hl" style="top:501px"></div>

</body></html>
